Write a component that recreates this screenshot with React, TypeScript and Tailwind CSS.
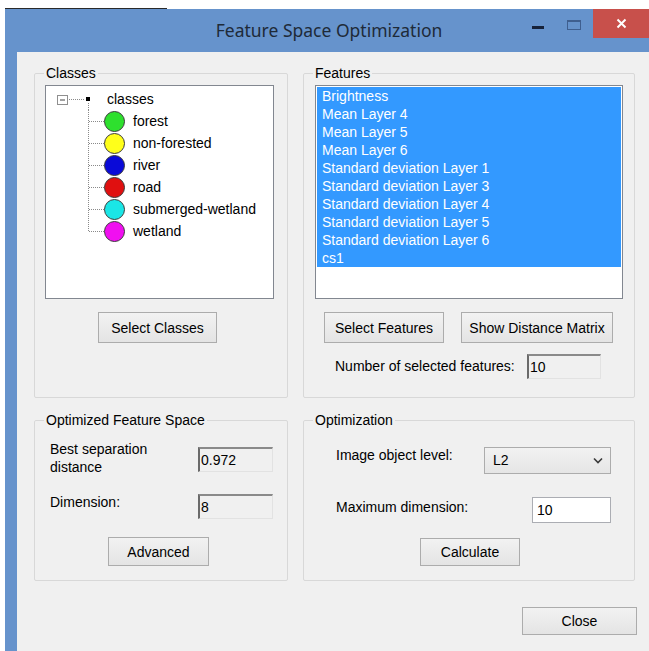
import React from "react";

const classes = [
  { name: "forest", color: "#2ee02e" },
  { name: "non-forested", color: "#ffff1a" },
  { name: "river", color: "#0a0ad8" },
  { name: "road", color: "#e01010" },
  { name: "submerged-wetland", color: "#1ae6e6" },
  { name: "wetland", color: "#f00ff0" },
];

const features = [
  "Brightness",
  "Mean Layer 4",
  "Mean Layer 5",
  "Mean Layer 6",
  "Standard deviation Layer 1",
  "Standard deviation Layer 3",
  "Standard deviation Layer 4",
  "Standard deviation Layer 5",
  "Standard deviation Layer 6",
  "cs1",
];

function WinButton({ label, className }: { label: string; className?: string }) {
  return (
    <button
      className={
        "border border-[#acacac] bg-gradient-to-b from-[#f2f2f2] to-[#e4e4e4] text-[14px] leading-none text-black " +
        (className ?? "")
      }
    >
      {label}
    </button>
  );
}

function ReadOnlyBox({ value, className }: { value: string; className?: string }) {
  return (
    <div
      className={
        "flex items-center bg-[#f0f0f0] border-t-2 border-l-2 border-r border-b border-t-[#8a8a8a] border-l-[#6a6a6a] border-r-[#e2e2e2] border-b-[#e2e2e2] pl-[1px] text-[14px] text-black " +
        (className ?? "")
      }
    >
      {value}
    </div>
  );
}

function Group({
  title,
  className,
  children,
}: {
  title: string;
  className?: string;
  children: React.ReactNode;
}) {
  return (
    <fieldset className={"border border-[#d8d8d8] rounded-[2px] flex flex-col " + (className ?? "")}>
      <legend className="ml-[9px] px-[2px] text-[14px] leading-[16px] text-black">{title}</legend>
      {children}
    </fieldset>
  );
}

function RootConnector() {
  return (
    <svg width="61" height="22" className="shrink-0">
      <rect x="11.5" y="7.5" width="10" height="9" fill="#fff" stroke="#8f8f8f" />
      <line x1="14" y1="12" x2="19" y2="12" stroke="#444" />
      <line x1="23" y1="11.5" x2="39" y2="11.5" stroke="#8a8a8a" strokeDasharray="1 1" />
      <rect x="40" y="9" width="4" height="4" fill="#000" />
      <line x1="42.5" y1="15" x2="42.5" y2="22" stroke="#8a8a8a" strokeDasharray="1 1" />
    </svg>
  );
}

function ChildConnector({ last }: { last: boolean }) {
  return (
    <svg width="58" height="22" className="shrink-0">
      <line x1="42.5" y1="0" x2="42.5" y2={last ? 11.5 : 22} stroke="#8a8a8a" strokeDasharray="1 1" />
      <line x1="43" y1="11.5" x2="58" y2="11.5" stroke="#8a8a8a" strokeDasharray="1 1" />
    </svg>
  );
}

export default function App() {
  return (
    <div className="w-[649px] h-[651px] bg-white overflow-hidden font-['Liberation_Sans',Arial,sans-serif]">
      {/* edge of the window behind */}
      <div className="h-[9px] flex items-end">
        <div className="ml-[5px] w-[162px] h-[1px] bg-[#2a2a2a]" />
      </div>

      <div className="ml-[5px] w-[644px] h-[642px] bg-[#6693cc] flex flex-col">
        {/* title bar */}
        <div className="h-[43px] grid grid-cols-[1fr_auto_1fr] shrink-0">
          <div />
          <div className="flex items-center pl-[4px] font-['Noto_Sans',sans-serif] text-[17.5px] text-[#1e2a38]">
            Feature Space Optimization
          </div>
          <div className="flex justify-end items-start">
            <svg width="12" height="4" className="shrink-0 mt-[17px]">
              <rect x="0" y="0" width="12" height="3" fill="#16223a" />
            </svg>
            <svg width="14" height="10" className="shrink-0 mt-[11px] ml-[23px]">
              <rect x="0.5" y="0.5" width="13" height="9" fill="none" stroke="#3f5f8f" />
              <line x1="0.5" y1="1.5" x2="13.5" y2="1.5" stroke="#3f5f8f" />
            </svg>
            <div className="shrink-0 w-[56px] h-[29px] ml-[12px] bg-[#c8504b] flex items-center justify-center">
              <svg width="11" height="11" viewBox="0 0 11 11">
                <path d="M1.5 1.5 L9.5 9.5 M9.5 1.5 L1.5 9.5" stroke="#fff" strokeWidth="2" />
              </svg>
            </div>
          </div>
        </div>

        {/* client area */}
        <div className="flex-1 ml-[12px] bg-[#f0f0f0] flex flex-col pt-[13px] pl-[17px] pr-[12px]">
          <div className="grid grid-cols-[254px_332px] gap-x-[15px] gap-y-[14px]">
            {/* Classes */}
            <Group title="Classes" className="h-[333px]">
              <div className="mt-[4px] ml-[10px] w-[229px] h-[214px] bg-white border border-[#828790] pt-[2px]">
                <div className="flex items-center h-[22px]">
                  <RootConnector />
                  <span className="text-[14px] text-black">classes</span>
                </div>
                {classes.map((c, i) => (
                  <div key={c.name} className="flex items-center h-[22px]">
                    <ChildConnector last={i === classes.length - 1} />
                    <div
                      className="w-[21px] h-[21px] rounded-full border border-[#3a3a3a] shrink-0"
                      style={{ backgroundColor: c.color }}
                    />
                    <span className="ml-[8px] text-[14px] text-black">{c.name}</span>
                  </div>
                ))}
              </div>
              <WinButton label="Select Classes" className="mt-[13px] ml-[63px] w-[119px] h-[31px]" />
            </Group>

            {/* Features */}
            <Group title="Features" className="h-[333px]">
              <div className="mt-[4px] ml-[11px] w-[308px] h-[214px] bg-white border border-[#828790] p-[1px]">
                <div className="bg-[#3399ff]">
                  {features.map((f) => (
                    <div key={f} className="h-[18px] leading-[18px] pl-[5px] text-[14px] text-white">
                      {f}
                    </div>
                  ))}
                </div>
              </div>
              <div className="flex mt-[13px] ml-[20px] gap-[17px]">
                <WinButton label="Select Features" className="w-[120px] h-[31px]" />
                <WinButton label="Show Distance Matrix" className="w-[152px] h-[31px]" />
              </div>
              <div className="flex items-center mt-[11px] ml-[31px]">
                <span className="w-[192px] text-[14px] text-black">Number of selected features:</span>
                <ReadOnlyBox value="10" className="w-[74px] h-[25px]" />
              </div>
            </Group>

            {/* Optimized Feature Space */}
            <Group title="Optimized Feature Space" className="h-[169px]">
              <div className="flex items-start mt-[12px] ml-[15px]">
                <span className="w-[148px] text-[14px] leading-[18px] text-black">
                  Best separation
                  <br />
                  distance
                </span>
                <ReadOnlyBox value="0.972" className="mt-[7px] w-[75px] h-[25px]" />
              </div>
              <div className="flex items-start mt-[17px] ml-[15px]">
                <span className="w-[148px] text-[14px] leading-[18px] text-black">Dimension:</span>
                <ReadOnlyBox value="8" className="mt-[1px] w-[75px] h-[25px]" />
              </div>
              <WinButton label="Advanced" className="mt-[18px] ml-[73px] w-[101px] h-[29px]" />
            </Group>

            {/* Optimization */}
            <Group title="Optimization" className="h-[169px]">
              <div className="flex items-start mt-[19px] ml-[32px]">
                <span className="w-[148px] text-[14px] leading-[16px] text-black">Image object level:</span>
                <div className="w-[127px] h-[27px] border border-[#acacac] bg-gradient-to-b from-[#f2f2f2] to-[#e5e5e5] flex items-center justify-between pl-[8px] pr-[7px]">
                  <span className="text-[14px] text-black">L2</span>
                  <svg width="10" height="7" viewBox="0 0 10 7">
                    <path d="M1 1.5 L5 5.5 L9 1.5" fill="none" stroke="#3a3a3a" strokeWidth="1.6" />
                  </svg>
                </div>
              </div>
              <div className="flex items-start mt-[23px] ml-[32px]">
                <span className="w-[196px] mt-[2px] text-[14px] leading-[16px] text-black">Maximum dimension:</span>
                <div className="w-[79px] h-[26px] bg-white border border-[#abadb3] flex items-center pl-[4px] text-[14px] text-black">
                  10
                </div>
              </div>
              <WinButton label="Calculate" className="mt-[15px] ml-[116px] w-[100px] h-[28px]" />
            </Group>
          </div>

          <div className="flex justify-end mt-[26px]">
            <WinButton label="Close" className="w-[115px] h-[28px]" />
          </div>
        </div>
      </div>
    </div>
  );
}
